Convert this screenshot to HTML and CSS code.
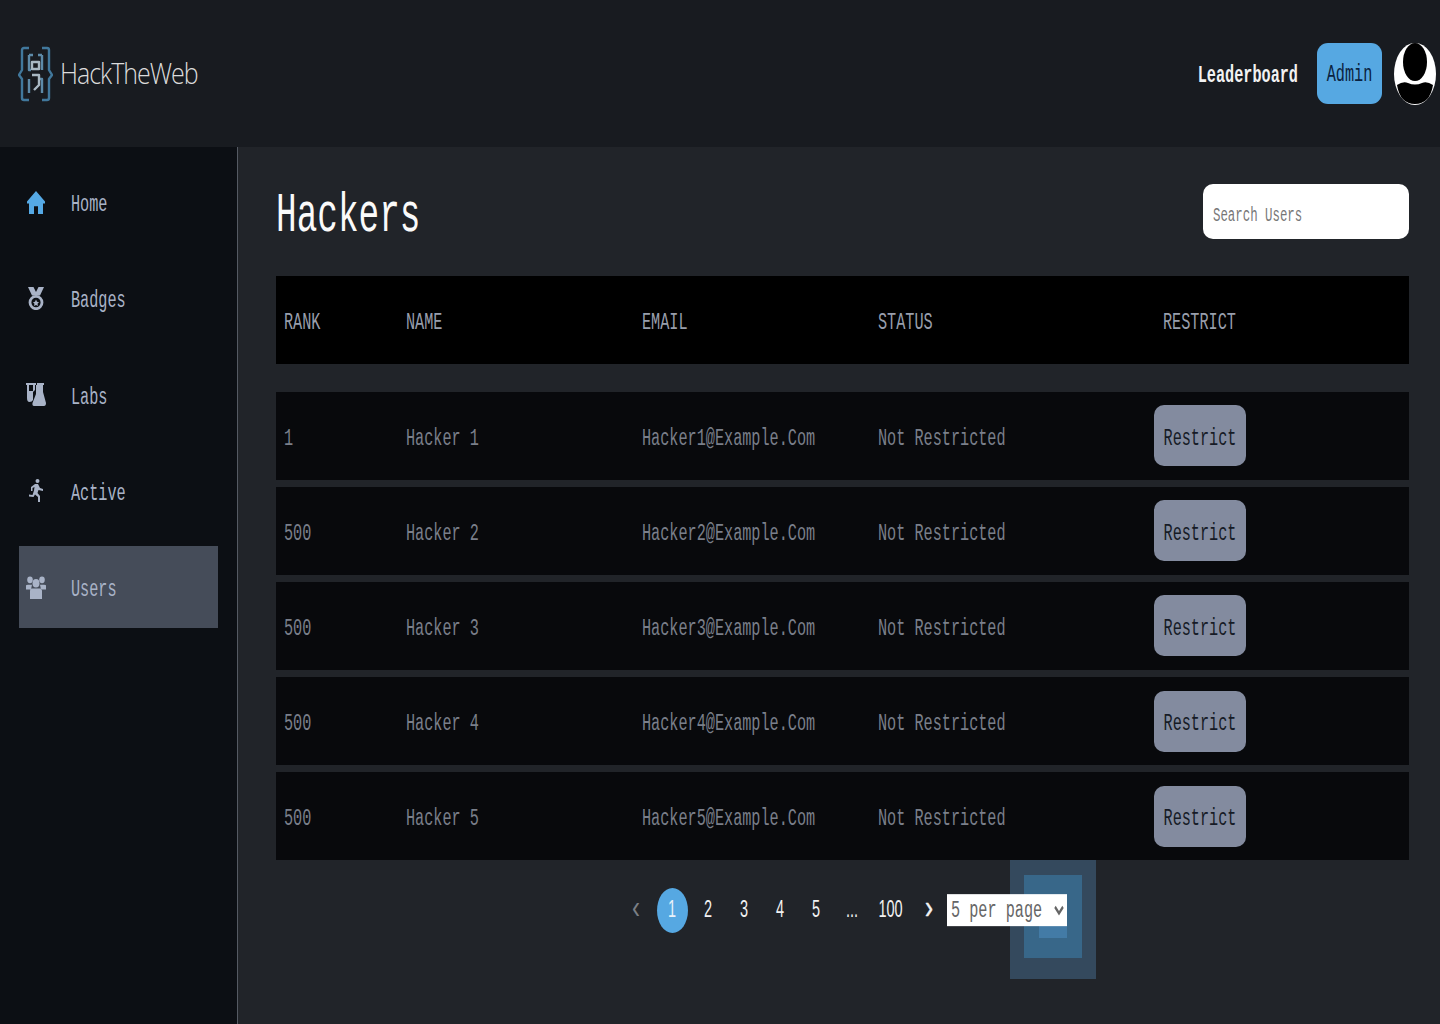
FILE: index.html
```html
<!DOCTYPE html>
<html lang="en">
<head>
    <meta charset="UTF-8">
    <meta name="viewport" content="width=device-width, initial-scale=1.0">
    <title>Users - HackTheWeb</title>
    <link rel="stylesheet" href="styles.css">
</head>
<body>
    <header class="topbar">
        <div class="brand">
            <svg class="brand-icon" viewBox="0 0 35 56" preserveAspectRatio="none" fill="none" stroke="#41789c" stroke-width="2.400" stroke-linejoin="round">
                <path d="M11 2H6Q4 2 4 4V24L1 29L4 33V52Q4 54 6 54H11"></path>
                <path d="M24 2H29Q31 2 31 4V24L34 29L31 33V52Q31 54 29 54H24"></path>
                <path d="M11 9V24H13M24 9V24M11 9H15M20 9H24M11 47V33M24 47V33H22" stroke="#5d8aa8"></path>
                <path d="M14 16H21V23H14ZM14 29H21V39L16 44" stroke="#a9b8c3"></path>
            </svg>
            <span class="brand-name">HackTheWeb</span>
        </div>
        <div class="topbar-right">
            <a class="leader-link"><span class="tall">Leaderboard</span></a>
            <button class="admin-btn"><span class="tall">Admin</span></button>
            <svg class="avatar" viewBox="0 0 42 62" preserveAspectRatio="none">
                <ellipse cx="21" cy="31" rx="21" ry="31" fill="#fff"></ellipse>
                <ellipse cx="21" cy="19" rx="12" ry="19" fill="#000"></ellipse>
                <path d="M3 42Q9 38 14 40Q21 43 28 40Q33 38 39 42Q36 61 21 61Q6 61 3 42Z" fill="#000"></path>
            </svg>
        </div>
    </header>

    <div class="layout">
        <nav class="sidebar">
            <a class="nav-item">
                <svg class="nav-icon home-icon" viewBox="-1 0 20 24" preserveAspectRatio="none"><path d="M9 0L18 11V13H16V24H11V16H7V24H2V13H0V11Z"></path></svg>
                <span class="tall">Home</span>
            </a>
            <a class="nav-item">
                <svg class="nav-icon" viewBox="-2 0 20 23" preserveAspectRatio="none">
                    <path d="M0 0H5.500L8 5L10.500 0H16L12 8.500H4Z"></path>
                    <ellipse cx="8" cy="15.500" rx="6" ry="6.200" fill="none" stroke="#a9b3c7" stroke-width="2.800"></ellipse>
                    <path d="M8 12.500L9 14.800L11 15.200L9.500 16.800L10 19L8 18L6 19L6.500 16.800L5 15.200L7 14.800Z"></path>
                </svg>
                <span class="tall">Badges</span>
            </a>
            <a class="nav-item">
                <svg class="nav-icon" viewBox="0 0 20 23" preserveAspectRatio="none"><path d="M0 0H10V2H9V7L7 9V17Q6 19 3.500 19Q1 19 1 15V2H0ZM3 2V8H7V2ZM11 0H18V2H17V9L20 20Q20 23 18 23H8Q6 23 6.500 20L10 11V2H11Z" fill-rule="evenodd"></path></svg>
                <span class="tall">Labs</span>
            </a>
            <a class="nav-item">
                <svg class="nav-icon" viewBox="-3 0 20 23" preserveAspectRatio="none"><path d="M8.500 0A2 2 0 1 1 8.500 4A2 2 0 1 1 8.500 0ZM6 5H9L11 9L14 10V12L9.500 11L8.500 14L11 17V23H9V18L6 15.500L4.500 18L0 17.500V15.500L3.500 16L5 11.500L5.500 8L3.500 9V12H2V8Z"></path></svg>
                <span class="tall">Active</span>
            </a>
            <a class="nav-item active">
                <svg class="nav-icon" viewBox="0 0 20 24" preserveAspectRatio="none"><ellipse cx="4" cy="4" rx="2.800" ry="3.500"></ellipse><ellipse cx="16" cy="4" rx="2.800" ry="3.500"></ellipse><ellipse cx="10" cy="7.500" rx="3.500" ry="4.500"></ellipse><path d="M0 10Q0 9 2 9H6L5 14H0ZM20 10Q20 9 18 9H14L15 14H20ZM6 13H14Q16 13 16 16V24H4V16Q4 13 6 13Z"></path></svg>
                <span class="tall">Users</span>
            </a>
        </nav>

        <main class="content">
            <div class="title-row">
                <h1><span class="tall">Hackers</span></h1>
                <div class="search-box"><span class="tall">Search Users</span></div>
            </div>

            <div class="users-table">
                <div class="row head-row">
                    <div><span class="tall">RANK</span></div>
                    <div><span class="tall">NAME</span></div>
                    <div><span class="tall">EMAIL</span></div>
                    <div><span class="tall">STATUS</span></div>
                    <div class="restrict-head"><span class="tall">RESTRICT</span></div>
                </div>
                <div class="row">
                    <div><span class="tall">1</span></div>
                    <div><span class="tall">Hacker 1</span></div>
                    <div><span class="tall">Hacker1@Example.Com</span></div>
                    <div><span class="tall">Not Restricted</span></div>
                    <div><button class="restrict-btn"><span class="tall">Restrict</span></button></div>
                </div>
                <div class="row">
                    <div><span class="tall">500</span></div>
                    <div><span class="tall">Hacker 2</span></div>
                    <div><span class="tall">Hacker2@Example.Com</span></div>
                    <div><span class="tall">Not Restricted</span></div>
                    <div><button class="restrict-btn"><span class="tall">Restrict</span></button></div>
                </div>
                <div class="row">
                    <div><span class="tall">500</span></div>
                    <div><span class="tall">Hacker 3</span></div>
                    <div><span class="tall">Hacker3@Example.Com</span></div>
                    <div><span class="tall">Not Restricted</span></div>
                    <div><button class="restrict-btn"><span class="tall">Restrict</span></button></div>
                </div>
                <div class="row">
                    <div><span class="tall">500</span></div>
                    <div><span class="tall">Hacker 4</span></div>
                    <div><span class="tall">Hacker4@Example.Com</span></div>
                    <div><span class="tall">Not Restricted</span></div>
                    <div><button class="restrict-btn"><span class="tall">Restrict</span></button></div>
                </div>
                <div class="row">
                    <div><span class="tall">500</span></div>
                    <div><span class="tall">Hacker 5</span></div>
                    <div><span class="tall">Hacker5@Example.Com</span></div>
                    <div><span class="tall">Not Restricted</span></div>
                    <div><button class="restrict-btn"><span class="tall">Restrict</span></button></div>
                </div>
            </div>

            <div class="pagination">
                <div class="glow glow-outer"></div>
                <div class="glow glow-middle"></div>
                <div class="glow glow-inner"></div>
                <a class="page-link arrow muted"><span class="tall">&#8249;</span></a>
                <a class="page-link current"><span class="tall">1</span></a>
                <a class="page-link"><span class="tall">2</span></a>
                <a class="page-link"><span class="tall">3</span></a>
                <a class="page-link"><span class="tall">4</span></a>
                <a class="page-link"><span class="tall">5</span></a>
                <a class="page-link"><span class="tall">...</span></a>
                <a class="page-link wide"><span class="tall">100</span></a>
                <a class="page-link arrow"><span class="tall">&#8250;</span></a>
                <select class="per-page">
                    <option>5 per page</option>
                    <option>10 per page</option>
                </select>
            </div>
        </main>
    </div>
</body>
</html>
```

FILE: styles.css
```css
* {
    margin: 0;
    padding: 0;
    box-sizing: border-box;
}

body {
    font-family: 'Liberation Mono', monospace;
    font-size: 15.2px;
    background-color: #212429;
    color: #a9b3c7;
    height: 1024px;
    overflow: hidden;
}

/* text in this design is drawn tall and narrow */
.tall {
    display: inline-block;
    transform: translateY(3px) scaleY(1.6);
}

.topbar {
    height: 147px;
    background-color: #181b20;
    display: flex;
    justify-content: space-between;
    align-items: center;
    padding: 0 4px 0 18px;
}

.brand {
    display: flex;
    align-items: center;
    gap: 7px;
}

.brand-icon {
    width: 35px;
    height: 56px;
}

.brand-name {
    font-family: 'Open Sans', sans-serif;
    font-weight: 300;
    font-size: 25px;
    letter-spacing: -1px;
    color: #dcdcdc;
    transform: translateY(-2px) scaleY(1.15);
}

.topbar-right {
    display: flex;
    align-items: center;
}

.leader-link {
    color: #f2f2f2;
    font-weight: bold;
    margin-right: 19px;
}

.leader-link .tall {
    transform: translateY(2px) scaleY(1.6);
}

.admin-btn {
    width: 65px;
    height: 61px;
    background-color: #56a8e2;
    color: #0a2240;
    border: none;
    border-radius: 11px;
    font-family: inherit;
    font-size: 15.2px;
    margin-right: 12px;
}

.admin-btn .tall {
    transform: translateY(1px) scaleY(1.6);
}

.avatar {
    width: 42px;
    height: 62px;
}

.layout {
    display: flex;
    height: 877px;
}

.sidebar {
    width: 238px;
    flex-shrink: 0;
    background-color: #0c0f14;
    border-right: 1px solid #555a63;
    padding: 14px 19px 0;
    display: flex;
    flex-direction: column;
    gap: 14.250px;
}

.nav-item {
    height: 82px;
    display: flex;
    align-items: center;
    padding-left: 7px;
    color: #a9b3c7;
}

.nav-item.active {
    background-color: #454c59;
}

.nav-icon {
    width: 20px;
    height: 23px;
    margin-right: 25px;
    fill: #a9b3c7;
}

.home-icon {
    fill: #55a9e5;
}

.content {
    flex: 1;
    padding: 37px 31px 0 38px;
}

.title-row {
    display: flex;
    justify-content: space-between;
    align-items: center;
    height: 55px;
    margin-bottom: 37px;
}

h1 {
    font-size: 34.400px;
    font-weight: normal;
    color: #fafafa;
}

h1 .tall,
.search-box .tall {
    transform: translateY(4px) scaleY(1.6);
}

.search-box {
    width: 206px;
    height: 55px;
    background-color: #fff;
    border-radius: 10px;
    color: #777;
    font-size: 12.4px;
    padding-left: 10px;
    display: flex;
    align-items: center;
}

.row {
    display: grid;
    grid-template-columns: 122px 236px 236px 276px 1fr;
    align-items: center;
    height: 88.5px;
    padding-left: 8px;
    margin-bottom: 6.6px;
    background-color: #08090c;
    color: #7a7f8a;
}

.head-row {
    height: 88px;
    background-color: #000;
    color: #989eac;
    margin-bottom: 27.5px;
}

.restrict-head {
    padding-left: 9px;
}

.restrict-btn {
    width: 92px;
    height: 61px;
    background-color: #838b9f;
    color: #161b26;
    border: none;
    border-radius: 10px;
    font-family: inherit;
    font-size: 15.2px;
}

.users-table .row:last-child {
    margin-bottom: 0;
}

.pagination {
    position: relative;
    display: flex;
    justify-content: center;
    align-items: center;
    height: 100px;
    color: #f2f2f2;
    font-family: 'Liberation Sans', sans-serif;
    font-size: 14.5px;
}

.pagination .tall {
    transform: translateY(-1px) scaleY(1.6);
}

.page-link {
    position: relative;
    width: 31px;
    height: 45px;
    margin: 0 2.5px;
    display: flex;
    justify-content: center;
    align-items: center;
}

.page-link.wide {
    width: 36px;
}

.page-link.arrow {
    font-size: 24px;
    -webkit-text-stroke: 0.4px;
}

.page-link.arrow .tall {
    transform: translateY(-3px) scaleY(1.4);
}

.page-link.muted {
    color: #7a7f85;
    -webkit-text-stroke: 0;
}

.page-link.current {
    background-color: #56a8e2;
    border-radius: 50%;
    color: #e8f2fa;
}

.per-page {
    position: relative;
    width: 120px;
    height: 19.5px;
    font-family: 'Liberation Mono', monospace;
    font-size: 15.2px;
    color: #666;
    background-color: #fff;
    border: none;
    transform: translateY(-1px) scaleY(1.6);
}

/* leftover highlight boxes behind the select */
.glow {
    position: absolute;
}

.glow-outer {
    left: 734px;
    top: 0;
    width: 86px;
    height: 119px;
    background-color: #34495d;
}

.glow-middle {
    left: 748px;
    top: 15px;
    width: 58px;
    height: 83px;
    background-color: #386789;
}

.glow-inner {
    left: 763px;
    top: 36px;
    width: 28px;
    height: 42px;
    background-color: #437ba6;
}
```
